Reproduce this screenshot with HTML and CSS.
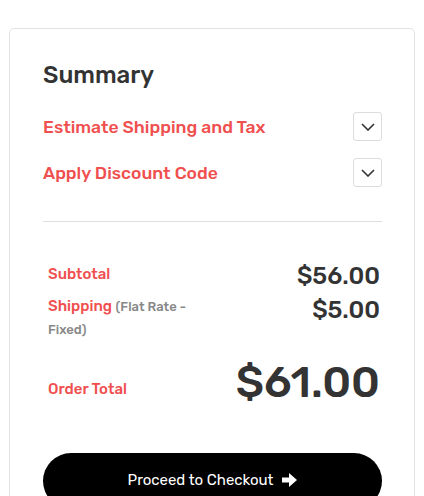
FILE: index.html
```html
<!DOCTYPE html>
<html>
<head>
<meta charset="utf-8">
<link rel="stylesheet" href="styles.css">
</head>
<body>
<div class="card">
  <h2 class="title">Summary</h2>
  <div class="toggle-row">
    <span class="toggle-label">Estimate Shipping and Tax</span>
    <span class="chev"><svg width="14" height="8" viewBox="0 0 14 8"><path d="M1 1l6 6 6-6" fill="none" stroke="#333" stroke-width="1.6"/></svg></span>
  </div>
  <div class="toggle-row">
    <span class="toggle-label">Apply Discount Code</span>
    <span class="chev"><svg width="14" height="8" viewBox="0 0 14 8"><path d="M1 1l6 6 6-6" fill="none" stroke="#333" stroke-width="1.6"/></svg></span>
  </div>
  <hr class="divider">
  <div class="totals">
    <div class="line first">
      <span class="lbl">Subtotal</span>
      <span class="amt">$56.00</span>
    </div>
    <div class="line">
      <span class="lbl ship">Shipping <span class="note">(Flat Rate - Fixed)</span></span>
      <span class="amt">$5.00</span>
    </div>
    <div class="line grand">
      <span class="lbl">Order Total</span>
      <span class="amt big">$61.00</span>
    </div>
  </div>
  <button class="checkout">Proceed to Checkout <svg width="16" height="14" viewBox="0 0 16 14"><path d="M0 4.5h7V0l8 7-8 7V9.5H0z" fill="#fff"/></svg></button>
</div>
</body>
</html>
```
FILE: styles.css
```css
html, body {
  margin: 0;
  padding: 0;
  background: #fff;
  font-family: "Rubik", "Noto Sans", "Open Sans", sans-serif;
  overflow: hidden;
}
.card {
  margin: 28px 0 0 9px;
  width: 406px;
  box-sizing: border-box;
  border: 1px solid #e2e2e2;
  border-radius: 5px;
  padding: 30px 32px 40px 33px;
}
.title {
  margin: 0 0 21px;
  font-size: 24px;
  font-weight: 500;
  color: #333;
  line-height: 32px;
}
.toggle-row {
  display: flex;
  align-items: center;
  justify-content: space-between;
  height: 29px;
  margin-bottom: 17px;
}
.toggle-label {
  color: #f04f4f;
  font-size: 17.5px;
  font-weight: 500;
}
.chev {
  width: 29px;
  height: 29px;
  box-sizing: border-box;
  border: 1px solid #dcdcdc;
  border-radius: 3px;
  display: flex;
  align-items: center;
  justify-content: center;
}
.divider {
  border: 0;
  border-top: 1px solid #dedede;
  margin: 34px 0 0;
}
.totals {
  padding: 39px 2px 0 5px;
}
.line {
  display: flex;
  justify-content: space-between;
  align-items: flex-start;
}
.lbl {
  color: #f04f4f;
  font-size: 15px;
  font-weight: 500;
  line-height: 22px;
}
.ship {
  max-width: 160px;
}
.note {
  color: #888;
  font-size: 13px;
  font-weight: 500;
}
.amt {
  color: #333;
  font-size: 24px;
  font-weight: 500;
  line-height: 30px;
}
.first .lbl { padding-top: 2px; }
.first { margin-bottom: 4px; }
.grand {
  align-items: flex-end;
  margin-top: 14px;
}
.grand .lbl { padding-bottom: 9px; }
.big {
  font-size: 44px;
  line-height: 54px;
  font-weight: 500;
}
.checkout {
  margin-top: 44px;
  width: 100%;
  height: 56px;
  border: 0;
  border-radius: 28px;
  background: #000;
  color: #fff;
  font-family: inherit;
  font-size: 15px;
  font-weight: 400;
  display: flex;
  align-items: center;
  justify-content: center;
  gap: 8px;
  padding: 0 0 2px;
}
```
